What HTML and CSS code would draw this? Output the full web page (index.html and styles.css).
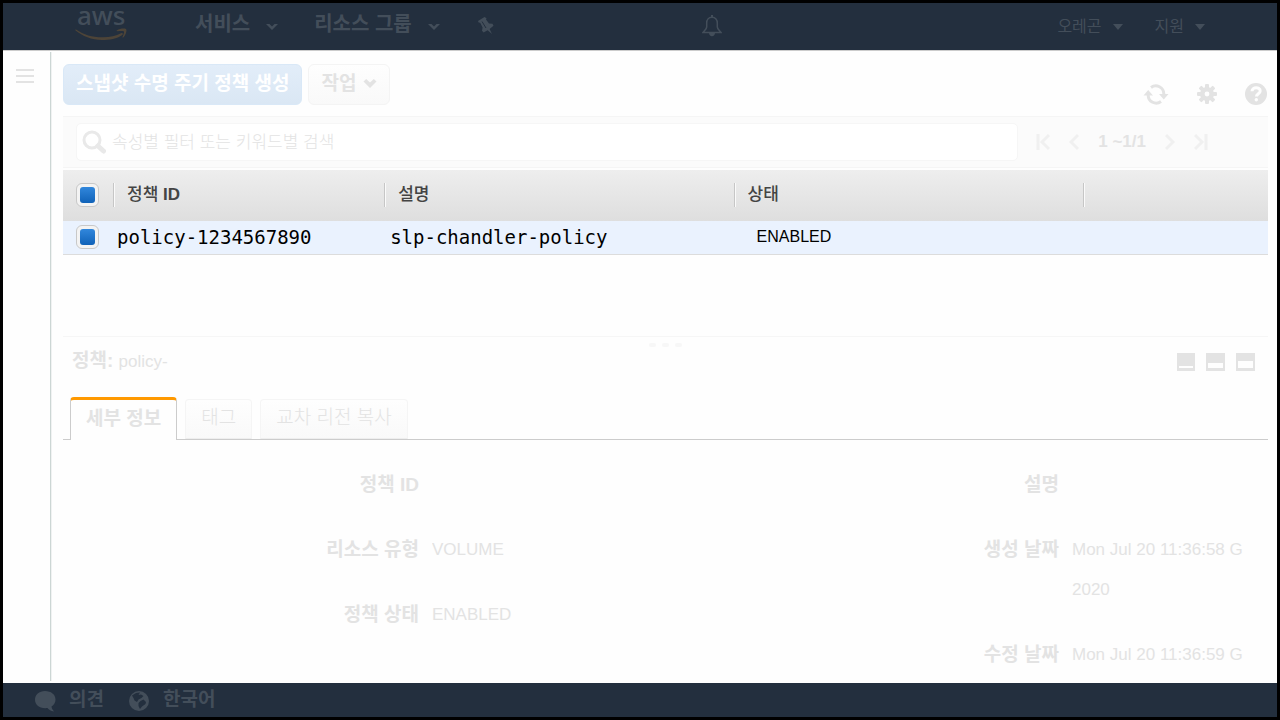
FILE: index.html
```html
<!DOCTYPE html>
<html lang="ko">
<head>
<meta charset="utf-8">
<title>수명 주기 정책</title>
<link rel="stylesheet" href="styles.css">
</head>
<body>
<div class="app">
  <header class="topbar">
    <a class="logo" href="#" aria-label="aws">
      <svg width="54" height="44" viewBox="0 -8 54 44">
        <text class="logo-text" x="1" y="18">aws</text>
        <path class="logo-smile" d="M0 22.500C8 28 17 30.500 27 30.300C34 30.200 40 28.800 45 26.300C46.600 25.500 47.600 27 46.300 28C41 32 33.500 33 26 33C15.500 33 6.500 29.300 -.4 23.600C-1 22.900-.7 22.100 0 22.500Z"/>
        <path class="logo-smile" d="M41 23.300C43.500 21.300 48.500 21.200 50 21.900C51.300 23.100 49.600 28.500 47.200 30.500C46.700 30.800 46.300 30.500 46.500 30C47.300 28 48.500 25.100 47.900 24.400C47.200 23.600 43.600 23.900 41.600 24.200C41 24.300 40.500 23.800 41 23.300Z"/>
      </svg>
    </a>
    <nav class="nav-main">
      <button class="nav-item">서비스
        <svg width="12" height="8" viewBox="0 0 12 8"><path d="M0 1h3.500L6 3.500 8.500 1H12L6 7z"/></svg>
      </button>
      <button class="nav-item">리소스 그룹
        <svg width="12" height="8" viewBox="0 0 12 8"><path d="M0 1h3.500L6 3.500 8.500 1H12L6 7z"/></svg>
      </button>
      <button class="nav-pin" aria-label="고정">
        <svg width="16" height="18" viewBox="0 0 16 18"><path d="M0 4L6.500 0 8.500 1.200 8 2.600 11 6.500 14.500 6.800 15.500 8.800 11.600 12 14 17 9.600 13.300 5.600 15.400 4 13.800 4.600 10.500 2.200 5.700 .6 5.600z"/><path class="pin-line" d="M4 4.500L8 11"/></svg>
      </button>
    </nav>
    <button class="nav-bell" aria-label="알림">
      <svg width="20" height="22" viewBox="0 0 20 22"><path class="bell-line" d="M10 2.300C6.500 2.300 4.700 4.700 4.700 8V12C4.700 14 2.500 15.500 1 17.500H19C17.500 15.500 15.300 14 15.300 12V8C15.300 4.700 13.500 2.300 10 2.300Z"/><path d="M9 0h2v2.500H9zM7 18h6c0 2-1.300 3.200-3 3.200S7 20 7 18z"/></svg>
    </button>
    <nav class="nav-right">
      <button class="nav-sub">오레곤 <svg width="10" height="6" viewBox="0 0 10 6"><path d="M0 0h10L5 6z"/></svg></button>
      <button class="nav-sub">지원 <svg width="10" height="6" viewBox="0 0 10 6"><path d="M0 0h10L5 6z"/></svg></button>
    </nav>
  </header>

  <div class="body">
    <aside class="rail">
      <button class="menu" aria-label="메뉴"><span></span><span></span><span></span></button>
    </aside>
    <main class="content">
      <div class="toolbar">
        <button class="btn btn-primary">스냅샷 수명 주기 정책 생성</button>
        <button class="btn">작업
          <svg width="14" height="9" viewBox="0 0 14 9"><path d="M.5 2.500L3.200 0 7 3.500 10.800 0 13.500 2.500 7 9z"/></svg>
        </button>
        <div class="tools">
          <button aria-label="새로 고침">
            <svg width="26" height="22" viewBox="0 0 26 22"><path class="arc" d="M8 4.500A8 8 0 0 1 20.800 11M18 18.500A8 8 0 0 1 5.200 12"/><path d="M16 11h9.500L20.800 16.500zM.5 12.500H10L5.200 7z"/></svg>
          </button>
          <button aria-label="설정">
            <svg width="20" height="20" viewBox="0 0 20 20"><g><rect x="8" y="0" width="4" height="20" rx="1"/><rect x="0" y="8" width="20" height="4" rx="1"/><rect x="8" y="0" width="4" height="20" rx="1" transform="rotate(45 10 10)"/><rect x="8" y="0" width="4" height="20" rx="1" transform="rotate(-45 10 10)"/><circle cx="10" cy="10" r="7"/></g><circle class="hole" cx="10" cy="10" r="2.400"/></svg>
          </button>
          <button aria-label="도움말">
            <svg width="22" height="22" viewBox="0 0 22 22"><circle cx="11" cy="11" r="11"/><path class="question" d="M7 8.300C7 3.500 15.200 3.700 15.200 8C15.200 10.700 11.400 10.800 11.400 13.600"/><circle class="hole" cx="11.300" cy="16.800" r="1.700"/></svg>
          </button>
        </div>
      </div>

      <div class="filter">
        <label class="search">
          <svg width="24" height="24" viewBox="0 0 24 24"><circle class="lens" cx="10" cy="10" r="8"/><path class="handle" d="M16 16L21.500 21"/></svg>
          <input type="text" placeholder="속성별 필터 또는 키워드별 검색" aria-label="속성별 필터 또는 키워드별 검색">
        </label>
        <div class="pager">
          <button aria-label="처음"><svg width="14" height="18" viewBox="0 0 14 18"><path d="M2 1v16M13 2L6 9l7 7"/></svg></button>
          <button aria-label="이전"><svg width="10" height="18" viewBox="0 0 10 18"><path d="M9 2L2 9l7 7"/></svg></button>
          <span class="page">1 ~1/1</span>
          <button aria-label="다음"><svg width="10" height="18" viewBox="0 0 10 18"><path d="M1 2l7 7-7 7"/></svg></button>
          <button aria-label="마지막"><svg width="14" height="18" viewBox="0 0 14 18"><path d="M12 1v16M1 2l7 7-7 7"/></svg></button>
        </div>
      </div>

      <table class="grid">
        <colgroup><col class="c-check"><col class="c-id"><col class="c-desc"><col class="c-state"><col></colgroup>
        <thead>
          <tr>
            <th><input type="checkbox" checked aria-label="모두 선택"></th>
            <th><span>정책 <b>ID</b></span></th>
            <th><span>설명</span></th>
            <th><span>상태</span></th>
            <th><span></span></th>
          </tr>
        </thead>
        <tbody>
          <tr>
            <td><input type="checkbox" checked aria-label="policy-1234567890 선택"></td>
            <td class="id">policy-1234567890</td>
            <td class="desc">slp-chandler-policy</td>
            <td class="state">ENABLED</td>
            <td></td>
          </tr>
        </tbody>
      </table>

      <section class="details">
        <div class="grip"><i></i><i></i><i></i></div>
        <div class="title">
          <h2>정책: <span>policy-</span></h2>
          <div class="panes">
            <button aria-label="작은 패널"><svg width="18" height="18" viewBox="0 0 18 18"><path fill-rule="evenodd" d="M0 0h18v18H0zM2 13v2h14v-2z"/></svg></button>
            <button aria-label="중간 패널"><svg width="19" height="18" viewBox="0 0 19 18"><path fill-rule="evenodd" d="M0 0h19v18H0zM2 10v5h15v-5z"/></svg></button>
            <button aria-label="큰 패널"><svg width="19" height="18" viewBox="0 0 19 18"><path fill-rule="evenodd" d="M0 0h19v18H0zM2 8v7h15V8z"/></svg></button>
          </div>
        </div>
        <div class="tabs" role="tablist">
          <button class="tab active" role="tab" aria-selected="true">세부 정보</button>
          <button class="tab" role="tab">태그</button>
          <button class="tab" role="tab">교차 리전 복사</button>
        </div>
        <div class="facts">
          <dl class="left">
            <dt>정책 ID</dt><dd></dd>
            <dt>리소스 유형</dt><dd>VOLUME</dd>
            <dt>정책 상태</dt><dd>ENABLED</dd>
          </dl>
          <dl class="right">
            <dt>설명</dt><dd></dd>
            <dt>생성 날짜</dt><dd>Mon Jul 20 11:36:58 G<br>2020</dd>
            <dt>수정 날짜</dt><dd>Mon Jul 20 11:36:59 G</dd>
          </dl>
        </div>
      </section>
    </main>
  </div>

  <footer class="footer">
    <a href="#">
      <svg width="22" height="22" viewBox="0 0 22 22"><path d="M11 1C17 1 21.500 4.500 21.500 9.500C21.500 12.500 20 15 17.500 16.500C17.700 18.500 18.800 20 20 21.500C17 21.300 14.800 19.800 13.500 18C6 19 1 15 1 9.800C1 4.500 5 1 11 1Z"/></svg>
      의견
    </a>
    <a href="#">
      <svg width="22" height="22" viewBox="0 0 22 22"><circle cx="11" cy="11" r="10"/><path class="land" d="M4 5.500L8 3 12 2.500 10.500 5 13 4.500 15.500 6 13.500 8 10.500 9.500 9 12 6.500 10.500 5.500 8zM12.500 11L15.500 9.500 18 12 17.500 14 14 16.500 12 19 10.500 16 10.500 13z"/></svg>
      한국어
    </a>
  </footer>
</div>
</body>
</html>
```

FILE: styles.css
```css
* { box-sizing: border-box; }

body {
  margin: 0;
  padding: 3px;
  background: #000;
  color: #e3e3e3;
  font-family: "Liberation Sans", "Noto Sans CJK KR", sans-serif;
  font-size: 19px;
  line-height: 24px;
}

button {
  margin: 0;
  padding: 0;
  border: 0;
  background: none;
  color: inherit;
  font: inherit;
  cursor: pointer;
}

svg { display: block; flex: none; fill: currentColor; }
a { color: inherit; text-decoration: none; }

.app {
  display: flex;
  flex-direction: column;
  min-height: calc(100vh - 6px);
  background: #fefefe;
}

/* Top bar */
.topbar {
  display: flex;
  align-items: flex-start;
  height: 48px;
  padding: 0 72px 0 73px;
  background: #232f3e;
  border-bottom: 1px solid #ccc;
  color: #434e5a;
}
.logo svg { height: 44px; overflow: visible; }
.logo { margin-top: -4px; }
.logo-text { font-family: "Noto Sans", sans-serif; font-size: 26px; font-weight: 500; }
.logo-smile { fill: #4d4438; }
.nav-main { display: flex; gap: 36px; padding: 9px 0 0 65px; }
.nav-item {
  display: flex;
  align-items: center;
  gap: 16px;
  font-size: 20px;
  font-weight: bold;
}
.nav-item svg { margin-top: 6px; }
.nav-pin { padding: 4px 0 0 2px; }
.nav-bell { margin: 12px auto 0 208px; }
.bell-line { fill: none; stroke: currentColor; stroke-width: 1.5; }
.pin-line { stroke: #232f3e; stroke-width: 1; }
.nav-right { display: flex; gap: 32px; padding-top: 12px; }
.nav-sub { display: flex; align-items: center; gap: 11px; font-size: 16px; }

/* Page frame */
.body { display: flex; flex: 1; padding: 1px 0 2px; }
.rail {
  flex: none;
  width: 48px;
  padding: 17px 13px;
  border-right: 1px solid #ccd6d4;
  box-shadow: 1px 0 #f0f2f2;
}
.menu { display: flex; flex-direction: column; gap: 4px; }
.menu span { width: 18px; height: 2px; background: #e3e3e3; }
.content { flex: 1; min-width: 0; padding: 12px 9px 0 12px; }

/* Toolbar */
.toolbar { display: flex; gap: 6px; height: 52px; }
.btn {
  display: flex;
  align-items: center;
  gap: 7px;
  height: 41px;
  padding: 0 12px 2px;
  border: 1px solid #f4f4f4;
  border-radius: 6px;
  background: linear-gradient(#fefefe, #f9f9f9);
  font-weight: bold;
}
.btn-primary {
  border-color: #d9e8f7;
  background: linear-gradient(#e2edf9, #dae7f4);
  color: #fff;
}
.tools {
  display: flex;
  align-items: center;
  gap: 28px;
  margin-left: auto;
  padding: 8px 1px 0 0;
}
.arc { fill: none; stroke: currentColor; stroke-width: 3; }
.hole { fill: #fefefe; }
.question { fill: none; stroke: #fefefe; stroke-width: 3; }

/* Filter bar */
.filter {
  display: flex;
  align-items: center;
  height: 52px;
  margin-bottom: 2px;
  padding: 0 60px 0 13px;
  border: solid #f5f5f5;
  border-width: 1px 0;
  background: #fbfbfb;
}
.search {
  display: flex;
  align-items: center;
  gap: 6px;
  flex: 1;
  height: 38px;
  padding-left: 5px;
  border: 1px solid #f6f6f6;
  border-radius: 5px;
  background: #fff;
}
.search input {
  flex: 1;
  min-width: 0;
  padding: 0 0 2px;
  border: 0;
  outline: 0;
  background: none;
  font: 300 17px/24px "Noto Sans CJK KR", sans-serif;
}
.search input::placeholder { color: #e3e3e3; opacity: 1; }
.lens { fill: none; stroke: #e9e9e9; stroke-width: 3; }
.handle { stroke: #e9e9e9; stroke-width: 5; stroke-linecap: round; }
.pager { display: flex; align-items: center; gap: 19px; padding-left: 18px; }
.pager svg { fill: none; stroke: #f0f0f0; stroke-width: 3; }
.page { font-size: 17px; font-weight: bold; }

/* Policy table */
.grid { width: 100%; table-layout: fixed; border-collapse: collapse; text-align: left; }
.c-check { width: 50px; }
.c-id { width: 22.5%; }
.c-desc, .c-state { width: 29%; }
.grid th {
  height: 51px;
  padding: 0 0 2px;
  color: #444;
  font-size: 17px;
  font-weight: 500;
}
.grid thead { background: linear-gradient(#eee, #dedede); }
.grid th span {
  display: block;
  height: 24px;
  padding-left: 13px;
  border-left: 1px solid #c6c6c6;
  box-shadow: inset 1px 0 #fafafa;
}
.grid th:first-child, .grid td:first-child { padding-left: 13px; }
.grid td {
  height: 33px;
  padding: 0 0 1px;
  border-bottom: 1px solid #dcdcdc;
  background: #eaf2fe;
  color: #000;
}
.grid .id, .grid .desc { font-family: "DejaVu Sans Mono", monospace; }
.grid .id { padding-left: 4px; }
.grid .desc { padding-left: 6px; }
.grid .state { padding-left: 23px; font-size: 16px; }
.grid input {
  appearance: none;
  display: block;
  width: 23px;
  height: 24px;
  margin: 0;
  padding: 3px;
  border: 1px solid #c8c8c8;
  border-radius: 6px;
  background: #f3f3f3;
}
.grid input:checked::before {
  content: "";
  display: block;
  height: 16px;
  border-radius: 3px;
  background: linear-gradient(#3187dc, #1062b8);
}

/* Details pane */
.details { margin-top: 81px; border-top: 1px solid #f6f6f6; }
.grip { display: flex; justify-content: center; gap: 6px; padding-top: 6px; }
.grip i { width: 7px; height: 4px; border-radius: 2px; background: #f7f7f7; }
.title {
  display: flex;
  align-items: center;
  justify-content: space-between;
  height: 30px;
  padding: 0 13px 0 9px;
}
.title h2 { margin: 0; font-size: 19px; font-weight: bold; }
.title span { font-size: 17px; font-weight: normal; }
.panes { display: flex; gap: 11px; }
.tabs {
  display: flex;
  align-items: flex-end;
  gap: 8px;
  margin-top: 20px;
  padding-left: 7px;
  border-bottom: 1px solid #ccc;
}
.tab {
  height: 40px;
  padding: 0 15px 2px;
  border: 1px solid #f5f5f5;
  border-bottom-color: #eee;
  border-radius: 4px 4px 0 0;
  background: linear-gradient(#fefefe, #f9f9f9);
  font-weight: 300;
}
.tab.active {
  height: 43px;
  margin-bottom: -1px;
  border-color: #ccc;
  border-top: 3px solid #f90;
  border-bottom: 0;
  background: #fefefe;
  font-weight: bold;
}
.facts { display: grid; grid-template-columns: 1fr 1fr; padding: 25px 24px 0 0; }
.facts dl {
  display: grid;
  align-content: start;
  gap: 25px 13px;
  margin: 0;
  line-height: 40px;
}
.facts .left { grid-template-columns: 356px 1fr; }
.facts .right { grid-template-columns: 1fr 172px; }
.facts dt { text-align: right; font-weight: bold; }
.facts dd { margin: 0; overflow: hidden; font-size: 17px; white-space: nowrap; }

/* Footer */
.footer {
  display: flex;
  gap: 24px;
  height: 34px;
  padding: 5px 31px;
  background: #232f3e;
  color: #434e5a;
  font-weight: bold;
}
.footer a { display: flex; gap: 13px; }
.footer svg { margin-top: 2px; }
.land { fill: #232f3e; }
```
